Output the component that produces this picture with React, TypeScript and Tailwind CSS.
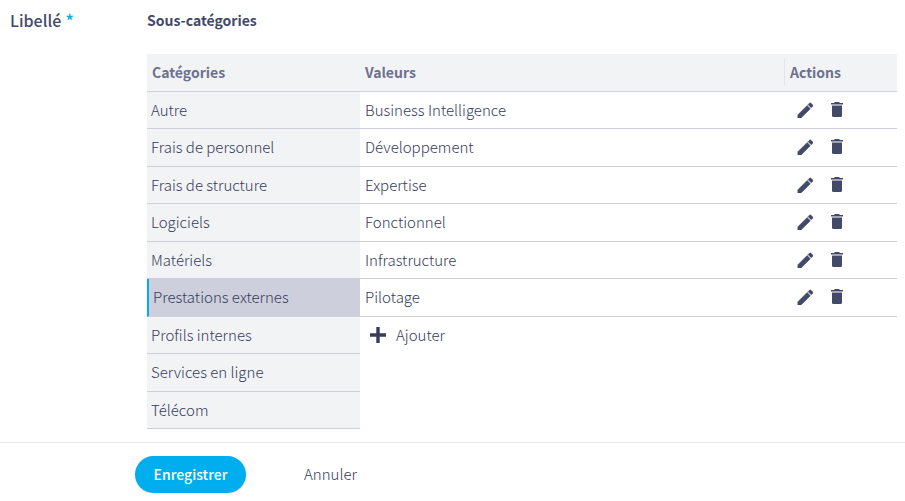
import { useState } from "react";

const categories = [
  "Autre",
  "Frais de personnel",
  "Frais de structure",
  "Logiciels",
  "Matériels",
  "Prestations externes",
  "Profils internes",
  "Services en ligne",
  "Télécom",
];

const values = [
  "Business Intelligence",
  "Développement",
  "Expertise",
  "Fonctionnel",
  "Infrastructure",
  "Pilotage",
];

function PencilIcon() {
  return (
    <svg viewBox="2 2 19 19" className="size-4" fill="currentColor" aria-hidden="true">
      <path d="M3 17.25V21h3.75L17.81 9.94l-3.75-3.75L3 17.25zM20.71 7.04a1 1 0 0 0 0-1.41l-2.34-2.34a1 1 0 0 0-1.41 0l-1.83 1.83 3.75 3.75 1.83-1.83z" stroke="currentColor" strokeWidth=".6" />
    </svg>
  );
}

function TrashIcon() {
  return (
    <svg viewBox="0 0 12 16" className="h-4 w-3" fill="currentColor" aria-hidden="true">
      <path d="M0 1h3L4 0h4l1 1h3v1H0z" />
      <path d="M0 2h12v1H0zM1 3h10v1H1z" opacity=".5" />
      <path d="M1 4h10v9.500a1.500 1.500 0 0 1-1.500 1.500h-7A1.500 1.500 0 0 1 1 13.500z" />
    </svg>
  );
}

function PlusIcon() {
  return (
    <svg viewBox="0 0 16 16" className="size-4" fill="currentColor" aria-hidden="true">
      <path d="M6.300 0h3.400v6.300H16v3.400H9.700V16H6.300V9.700H0V6.300h6.300z" />
    </svg>
  );
}

export default function App() {
  const [selected, setSelected] = useState("Prestations externes");

  return (
    <form
      className="bg-white font-['Noto_Sans_CJK_SC',sans-serif] text-[15px] leading-5 font-light text-[#363c5c]"
      onSubmit={(e) => e.preventDefault()}
    >
      <div className="flex pt-2.5 pr-2 pb-[13px]">
        <div className="flex w-[147px] shrink-0 items-start gap-1 pl-2.5 text-base leading-5 font-medium text-[#434968]">
          <span>Libellé</span>
          <span className="text-lg leading-5 text-[#00adef]">*</span>
        </div>
        <section className="min-w-0 flex-1">
          <h2 className="mb-6 text-sm leading-5 font-bold text-[#434968]">Sous-catégories</h2>
          <div className="flex items-start">
            <table className="w-[213px] shrink-0 border-separate border-spacing-0 bg-[#f2f3f5]">
              <thead>
                <tr className="h-[38px] text-sm leading-5">
                  <th className="border-b border-[#cdcfdc] px-[5px] pt-2 pb-0 text-left align-top font-bold text-[#6c7190]">
                    Catégories
                  </th>
                </tr>
              </thead>
              <tbody>
                {categories.map((name) => (
                  <tr key={name} className="odd:h-[37px] even:h-[38px]">
                    <td
                      className={
                        name === selected
                          ? "border-b border-l-2 border-b-[#cdcfdc] border-l-[#00adef] bg-[#cdcfdc] p-0 pt-2 align-top"
                          : "border-b border-[#cdcfdc] p-0 pt-2 align-top"
                      }
                    >
                      <button
                        type="button"
                        className="block w-full px-1 text-left"
                        onClick={() => setSelected(name)}
                      >
                        {name}
                      </button>
                    </td>
                  </tr>
                ))}
              </tbody>
            </table>
            <div className="min-w-0 flex-1">
              <table className="w-full border-separate border-spacing-0">
                <thead>
                  <tr className="h-[38px] bg-[#f2f3f5] text-left text-sm leading-5 text-[#6c7190]">
                    <th className="border-b border-[#cdcfdc] px-[5px] pt-2 pb-0 align-top font-bold">
                      Valeurs
                    </th>
                    <th className="w-[113px] border-b border-[#cdcfdc] p-0 pt-[5px] align-top font-bold">
                      <div className="border-l border-[#e3e4ea] py-[3px] pl-[5px]">Actions</div>
                    </th>
                  </tr>
                </thead>
                <tbody>
                  {values.map((value) => (
                    <tr key={value} className="odd:h-[37px] even:h-[38px]">
                      <td className="border-b border-[#cdcfdc] px-[5px] pt-2 pb-0 align-top">{value}</td>
                      <td className="border-b border-[#cdcfdc] p-0 pt-2.5 pl-[13px] align-top">
                        <div className="flex items-center gap-[18px] text-[#434968]">
                          <button type="button" aria-label={`Modifier ${value}`}>
                            <PencilIcon />
                          </button>
                          <button type="button" aria-label={`Supprimer ${value}`}>
                            <TrashIcon />
                          </button>
                        </div>
                      </td>
                    </tr>
                  ))}
                </tbody>
              </table>
              <button type="button" className="flex h-9 items-center gap-2.5 pl-2.5">
                <PlusIcon />
                Ajouter
              </button>
            </div>
          </div>
        </section>
      </div>
      <footer className="flex items-center border-t border-[#e8e8ec] pt-[13px] pl-[135px]">
        <button
          type="submit"
          className="h-[37px] w-[111px] rounded-full bg-[#00adef] pb-0.5 text-sm leading-5 font-medium text-white shadow-sm"
        >
          Enregistrer
        </button>
        <button type="button" className="ml-[58px] pb-0.5">
          Annuler
        </button>
      </footer>
    </form>
  );
}
